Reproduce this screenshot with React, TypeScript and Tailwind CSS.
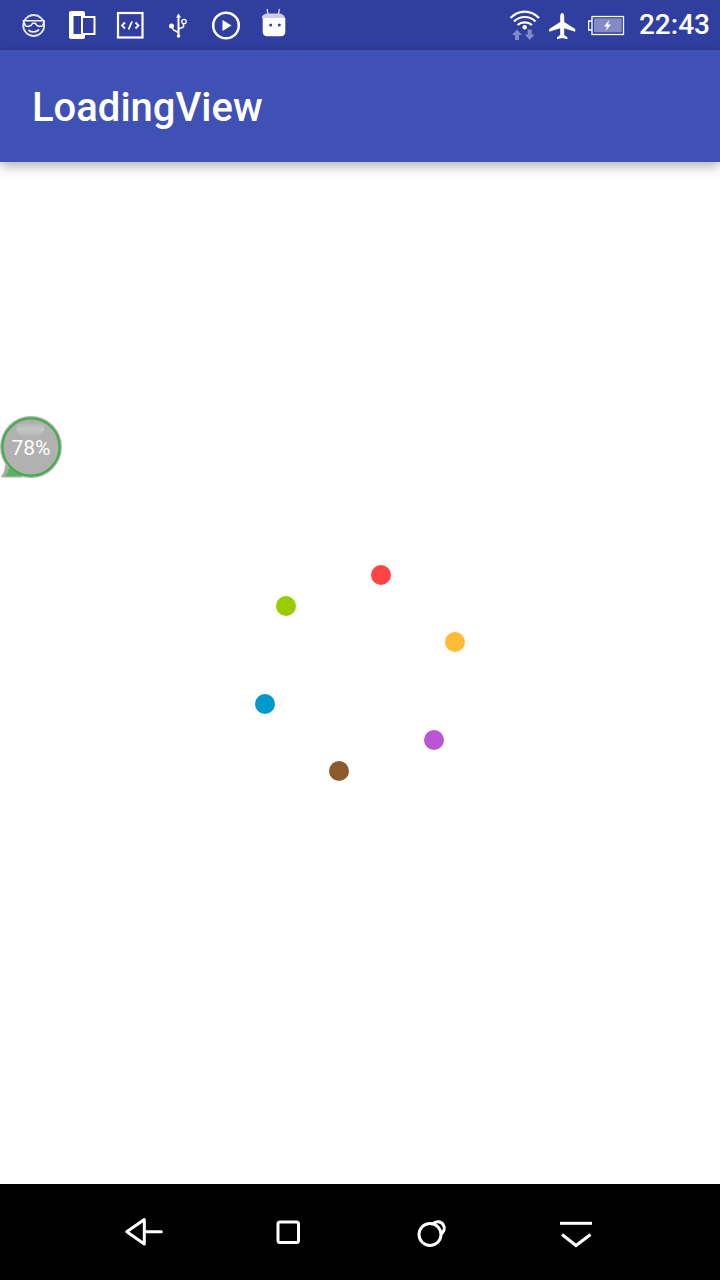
export default function App() {
  return (
    <div className="flex h-[1280px] w-[720px] flex-col overflow-hidden bg-white font-['Roboto',sans-serif]">
      <StatusBar />
      <header className="relative z-10 flex h-[112px] items-center bg-[#3f51b5] pl-8 shadow-[0_4px_12px_rgba(0,0,0,0.32)]">
        <h1 className="mt-[4px] text-[40px] font-medium leading-none text-white">LoadingView</h1>
      </header>

      <main className="relative flex-1 bg-white">
        <ProgressBubble />
        {/* spinner dots, caught mid-rotation */}
        <span className="absolute left-[371px] top-[403px] h-5 w-5 rounded-full bg-[#ff4444]" />
        <span className="absolute left-[276px] top-[434px] h-5 w-5 rounded-full bg-[#99cc00]" />
        <span className="absolute left-[445px] top-[470px] h-5 w-5 rounded-full bg-[#ffbb33]" />
        <span className="absolute left-[255px] top-[532px] h-5 w-5 rounded-full bg-[#0099cc]" />
        <span className="absolute left-[424px] top-[568px] h-5 w-5 rounded-full bg-[#ba55d3]" />
        <span className="absolute left-[329px] top-[599px] h-5 w-5 rounded-full bg-[#8b5a2b]" />
      </main>

      <NavBar />
    </div>
  )
}

function StatusBar() {
  return (
    <div className="flex h-[50px] shrink-0 items-center justify-between bg-[#303f9f] pl-[10px] pr-[10px]">
      <div className="flex">
        <svg className="h-[50px] w-12" viewBox="10 0 48 50" fill="none">
          <circle cx="33.7" cy="25.5" r="10.5" stroke="#fff" strokeOpacity="0.85" strokeWidth="1.8" />
          <path d="M23.500 20.800h20.500v1.200l-1.200 3.300c-.6 1.200-4.300 1.400-5.600.4l-1.900-2.400h-2.700l-1.900 2.400c-1.300 1-5 .8-5.600-.4l-1.200-3.300z" fill="#303f9f" stroke="#fff" strokeOpacity="0.95" strokeWidth="1.600" />
          <path d="M29 30.500c2.500 2 7 2 9.500-.5" stroke="#fff" strokeOpacity="0.9" strokeWidth="1.800" strokeLinecap="round" />
        </svg>
        <svg className="h-[50px] w-12" viewBox="58 0 48 50" fill="none">
          <path d="M71 11h12c1.200 0 2 .8 2 2v3h-11.500v18H85v3c0 1.200-.8 2-2 2H71c-1.200 0-2-.8-2-2V13c0-1.200.8-2 2-2z" fill="#fff" />
          <rect x="82" y="17" width="12.500" height="17" stroke="#fff" strokeWidth="2" />
        </svg>
        <svg className="h-[50px] w-12" viewBox="106 0 48 50" fill="none">
          <rect x="118" y="13" width="24.500" height="24.500" stroke="#fff" strokeWidth="2.200" />
          <path d="M125 22.500l-3 3 3 3M135.500 22.500l3 3-3 3M132 21.500l-3.500 8" stroke="#fff" strokeWidth="1.800" />
        </svg>
        <svg className="h-[50px] w-12" viewBox="154 0 48 50" fill="none">
          <path d="M178.500 17v19" stroke="#fff" strokeWidth="2" />
          <path d="M178.500 13.500l2.500 4h-5z" fill="#fff" />
          <circle cx="178.500" cy="36" r="1.800" fill="#fff" />
          <circle cx="171.500" cy="26" r="2.500" fill="#fff" />
          <path d="M172 27l1.500 3 5 2.500M178.500 29l5-2v-3" stroke="#fff" strokeWidth="1.500" />
          <circle cx="184" cy="21.500" r="2.200" stroke="#fff" strokeWidth="1.300" />
        </svg>
        <svg className="h-[50px] w-12" viewBox="202 0 48 50" fill="none">
          <circle cx="226" cy="25.500" r="12.800" stroke="#fff" strokeWidth="2.500" />
          <path d="M222.500 20l9 5.500-9 5.500z" fill="#fff" />
        </svg>
        <svg className="h-[50px] w-12" viewBox="250 0 48 50" fill="none">
          <path d="M267 9l1 5M279.500 9l-1 5" stroke="#fff" strokeOpacity="0.8" strokeWidth="1.300" />
          <path d="M268 13.500h10.500c3.500 0 6 1.500 6.500 4.500h-23.500c.5-3 3-4.500 6.500-4.500z" fill="#fff" fillOpacity="0.75" />
          <path d="M262.700 18h22.600v14c0 2.500-1.800 4.300-4.300 4.300h-14c-2.500 0-4.300-1.800-4.300-4.300z" fill="#fff" />
          <circle cx="270.700" cy="25" r="1.500" fill="#303f9f" />
          <circle cx="279.300" cy="25" r="1.500" fill="#303f9f" />
        </svg>
      </div>

      <div className="flex items-center">
        <svg className="h-[50px] w-[84px]" viewBox="505 0 84 50" fill="none">
          <path d="M511.500 18c8-8.500 20.500-8.500 28.500 0M515 21.500c6-6 15.500-6 21.500 0M518.500 25c4-3.500 10.500-3.500 14.500 0" stroke="#fff" strokeWidth="2.200" />
          <circle cx="525.700" cy="27.300" r="2.200" fill="#fff" />
          <path d="M518 29.500l5 5.500h-3v5h-4v-5h-3zM530.700 40l-5-5.500h3v-5h4v5h3z" fill="#fff" fillOpacity="0.4" />
          <path d="M563.200 13c1.100 0 2 1.500 2 3.500v5.500l11 7v2.800l-11-3.500v6.700l3.200 2.200v2l-5.200-1.300-5.200 1.300v-2l3.200-2.200v-6.700l-11 3.500v-2.800l11-7v-5.500c0-2 .9-3.500 2-3.500z" fill="#fff" />
        </svg>
        <svg className="h-[50px] w-[37px]" viewBox="589 0 37 50" fill="none">
          <path d="M593 21h-3.400v9h3.400" stroke="#fff" strokeWidth="1.300" />
          <rect x="593" y="16.500" width="31.500" height="18" stroke="#fff" strokeWidth="1.300" />
          <rect x="595" y="18.300" width="27.700" height="14" fill="#fff" fillOpacity="0.4" />
          <path d="M610.500 19.500l-5.500 7h3l-1.500 4.500 5.500-6.500h-3z" fill="#fff" />
        </svg>
        <span className="ml-[14px] text-[28px] font-medium leading-none text-white">22:43</span>
      </div>
    </div>
  )
}

function ProgressBubble() {
  return (
    <div className="absolute left-0 top-[254px] h-[62px] w-[62px]">
      <svg className="absolute inset-0 h-full w-full" viewBox="0 0 62 62" fill="none">
        <defs>
          <linearGradient id="gloss" x1="0" y1="0" x2="0" y2="1">
            <stop offset="0" stopColor="#a8a8a8" />
            <stop offset="0.5" stopColor="#c6c6c6" />
            <stop offset="1" stopColor="#b1b1b1" />
          </linearGradient>
        </defs>
        <path d="M1.500 59.500c2.500-2.500 3.500-6 3.500-11l18 13H3c-1.500 0-2.200-1-1.500-2z" fill="#aaaaaa" />
        <circle cx="31" cy="31" r="31" fill="#b5b5b5" />
        <path d="M5 60c2-2 3.500-5 4.500-9l14 9z" fill="#5cb160" />
        <circle cx="31" cy="31" r="28.600" fill="#b1b1b1" stroke="#3fae49" strokeWidth="2.200" />
        <ellipse cx="30.500" cy="13" rx="14" ry="8.500" fill="url(#gloss)" />
      </svg>
      <span className="absolute inset-0 mt-[2px] flex items-center justify-center text-[21px] leading-none text-white">78%</span>
    </div>
  )
}

function NavBar() {
  return (
    <nav className="grid h-[96px] shrink-0 grid-cols-4 bg-black px-[72px]">
      <svg className="h-[96px] w-36" viewBox="72 1184 144 96" fill="none" stroke="#fff" strokeWidth="3" strokeLinejoin="round" strokeLinecap="round">
        <path d="M144.300 1219.500v24.500l-17.500-12.300zM144.300 1231.700h17" />
      </svg>
      <svg className="h-[96px] w-36" viewBox="216 1184 144 96" fill="none" stroke="#fff" strokeWidth="3">
        <rect x="278" y="1222" width="20.500" height="20.500" rx="2" />
      </svg>
      <svg className="h-[96px] w-36" viewBox="360 1184 144 96" fill="none" stroke="#fff" strokeWidth="3">
        <circle cx="430" cy="1234.500" r="11" />
        <path d="M433 1223.800a6.500 6.500 0 1 1 7 10.500" />
      </svg>
      <svg className="h-[96px] w-36" viewBox="504 1184 144 96" fill="none" stroke="#fff" strokeWidth="3">
        <path d="M560 1223.300h32" />
        <path d="M562 1234.500l14 11 14.500-11" />
      </svg>
    </nav>
  )
}
